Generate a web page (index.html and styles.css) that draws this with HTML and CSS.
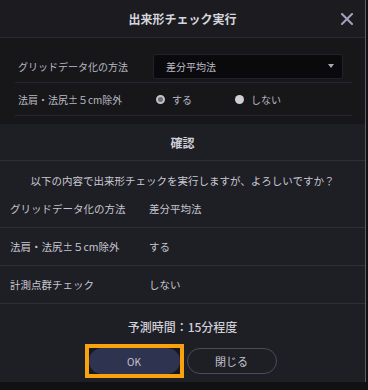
FILE: index.html
```html
<!DOCTYPE html>
<html lang="ja">
<head>
<meta charset="utf-8">
<link rel="stylesheet" href="styles.css">
</head>
<body>
<div class="dialog">
  <div class="header">
    <div class="title">出来形チェック実行</div>
    <svg class="close" width="12" height="12" viewBox="0 0 12 12"><path d="M1 1L11 11M11 1L1 11" stroke="#a3a1bb" stroke-width="2" stroke-linecap="square"/></svg>
  </div>
  <div class="form">
    <div class="frow">
      <div class="flabel">グリッドデータ化の方法</div>
      <div class="select"><span>差分平均法</span><span class="caret"></span></div>
    </div>
    <div class="frow">
      <div class="flabel">法肩・法尻±５cm除外</div>
      <div class="radios">
        <div class="opt"><span class="radio checked"></span><span>する</span></div>
        <div class="opt"><span class="radio"></span><span>しない</span></div>
      </div>
    </div>
  </div>
  <div class="confirm">
    <div class="chead">確認</div>
    <div class="question">以下の内容で出来形チェックを実行しますが、よろしいですか？</div>
    <div class="crow"><div class="clabel">グリッドデータ化の方法</div><div>差分平均法</div></div>
    <div class="crow"><div class="clabel">法肩・法尻±５cm除外</div><div>する</div></div>
    <div class="crow"><div class="clabel">計測点群チェック</div><div>しない</div></div>
    <div class="footer">
      <div class="estimate">予測時間：15分程度</div>
      <div class="buttons">
        <span class="focus"><button class="btn ok">OK</button></span>
        <button class="btn cancel">閉じる</button>
      </div>
    </div>
  </div>
</div>
</body>
</html>
```
FILE: styles.css
```css
* { box-sizing: border-box; }
html, body { margin: 0; padding: 0; }
body {
  background: #111114;
  font-family: "Noto Sans CJK JP", "Noto Sans", sans-serif;
  color: #c6c6cf;
  width: 368px;
  height: 390px;
  overflow: hidden;
}
.dialog {
  width: 366px;
  height: 382px;
  border-right: 1px solid #5c5c62;
  background: #1e1e25;
  display: flex;
  flex-direction: column;
}
.header {
  height: 38px;
  flex: none;
  background: #1c1c20;
  border-bottom: 1px solid #2a2a30;
  display: flex;
  align-items: center;
  justify-content: center;
  position: relative;
}
.title {
  font-size: 12px;
  font-weight: 700;
  color: #d6d6de;
  line-height: 16px;
}
.close {
  position: absolute;
  right: 12px;
  top: 13px;
}
.form {
  background: #17171a;
  padding: 12px 13px 8px 15px;
  flex: none;
}
.frow {
  height: 33px;
  border-bottom: 1px solid #26262b;
  display: flex;
  align-items: center;
}
.flabel {
  width: 138px;
  padding-left: 3px;
  font-size: 10px;
  color: #b9b9c2;
  flex: none;
}
.select {
  width: 190px;
  height: 25px;
  background: #0a0a0c;
  border: 1px solid #222226;
  border-radius: 3px;
  display: flex;
  align-items: center;
  justify-content: space-between;
  padding: 0 8px 0 12px;
  font-size: 10px;
  color: #bcbcc4;
}
.caret {
  width: 0;
  height: 0;
  border-left: 3.5px solid transparent;
  border-right: 3.5px solid transparent;
  border-top: 4px solid #a8a8b0;
}
.radios {
  display: flex;
  padding-left: 3px;
}
.opt {
  width: 79px;
  display: flex;
  align-items: center;
  gap: 7px;
  font-size: 10px;
  color: #b9b9c2;
}
.radio {
  width: 9px;
  height: 9px;
  border-radius: 50%;
  background: #cfcfd3;
}
.radio.checked {
  background: #6e6e72;
  border: 2px solid #c4c4c8;
}
.confirm {
  flex: 1;
  display: flex;
  flex-direction: column;
}
.chead {
  height: 37px;
  border-bottom: 1px solid #2f2f37;
  display: flex;
  align-items: center;
  justify-content: center;
  font-size: 12px;
  font-weight: 700;
  color: #d0d0d8;
}
.question {
  padding: 12px 0 1px;
  line-height: 16px;
  text-align: center;
  font-size: 10.5px;
  color: #c9c9d2;
}
.crow {
  height: 38px;
  border-bottom: 1px solid #2f2f37;
  display: flex;
  align-items: center;
  padding-left: 10px;
  font-size: 10.5px;
  color: #c6c6cf;
}
.clabel {
  width: 139px;
}
.footer {
  display: flex;
  flex-direction: column;
  align-items: center;
  padding-top: 16px;
}
.estimate {
  font-size: 12px;
  font-weight: 500;
  line-height: 14px;
  color: #cfcfd7;
}
.buttons {
  margin-top: 10px;
  display: flex;
  align-items: center;
  gap: 3px;
  padding-right: 4px;
}
.focus {
  display: flex;
  border: 4px solid #f9a10f;
  background: #17171c;
}
.btn {
  height: 26px;
  border-radius: 13px;
  font-family: "Noto Sans CJK JP", "Noto Sans", sans-serif;
  font-size: 10px;
  color: #c4c4d0;
  padding: 0;
}
.ok {
  width: 91px;
  background: #2e3350;
  border: none;
  margin: 0;
}
.cancel {
  width: 90px;
  background: transparent;
  border: 1px solid #4b4b5c;
  font-size: 11px;
}
```
